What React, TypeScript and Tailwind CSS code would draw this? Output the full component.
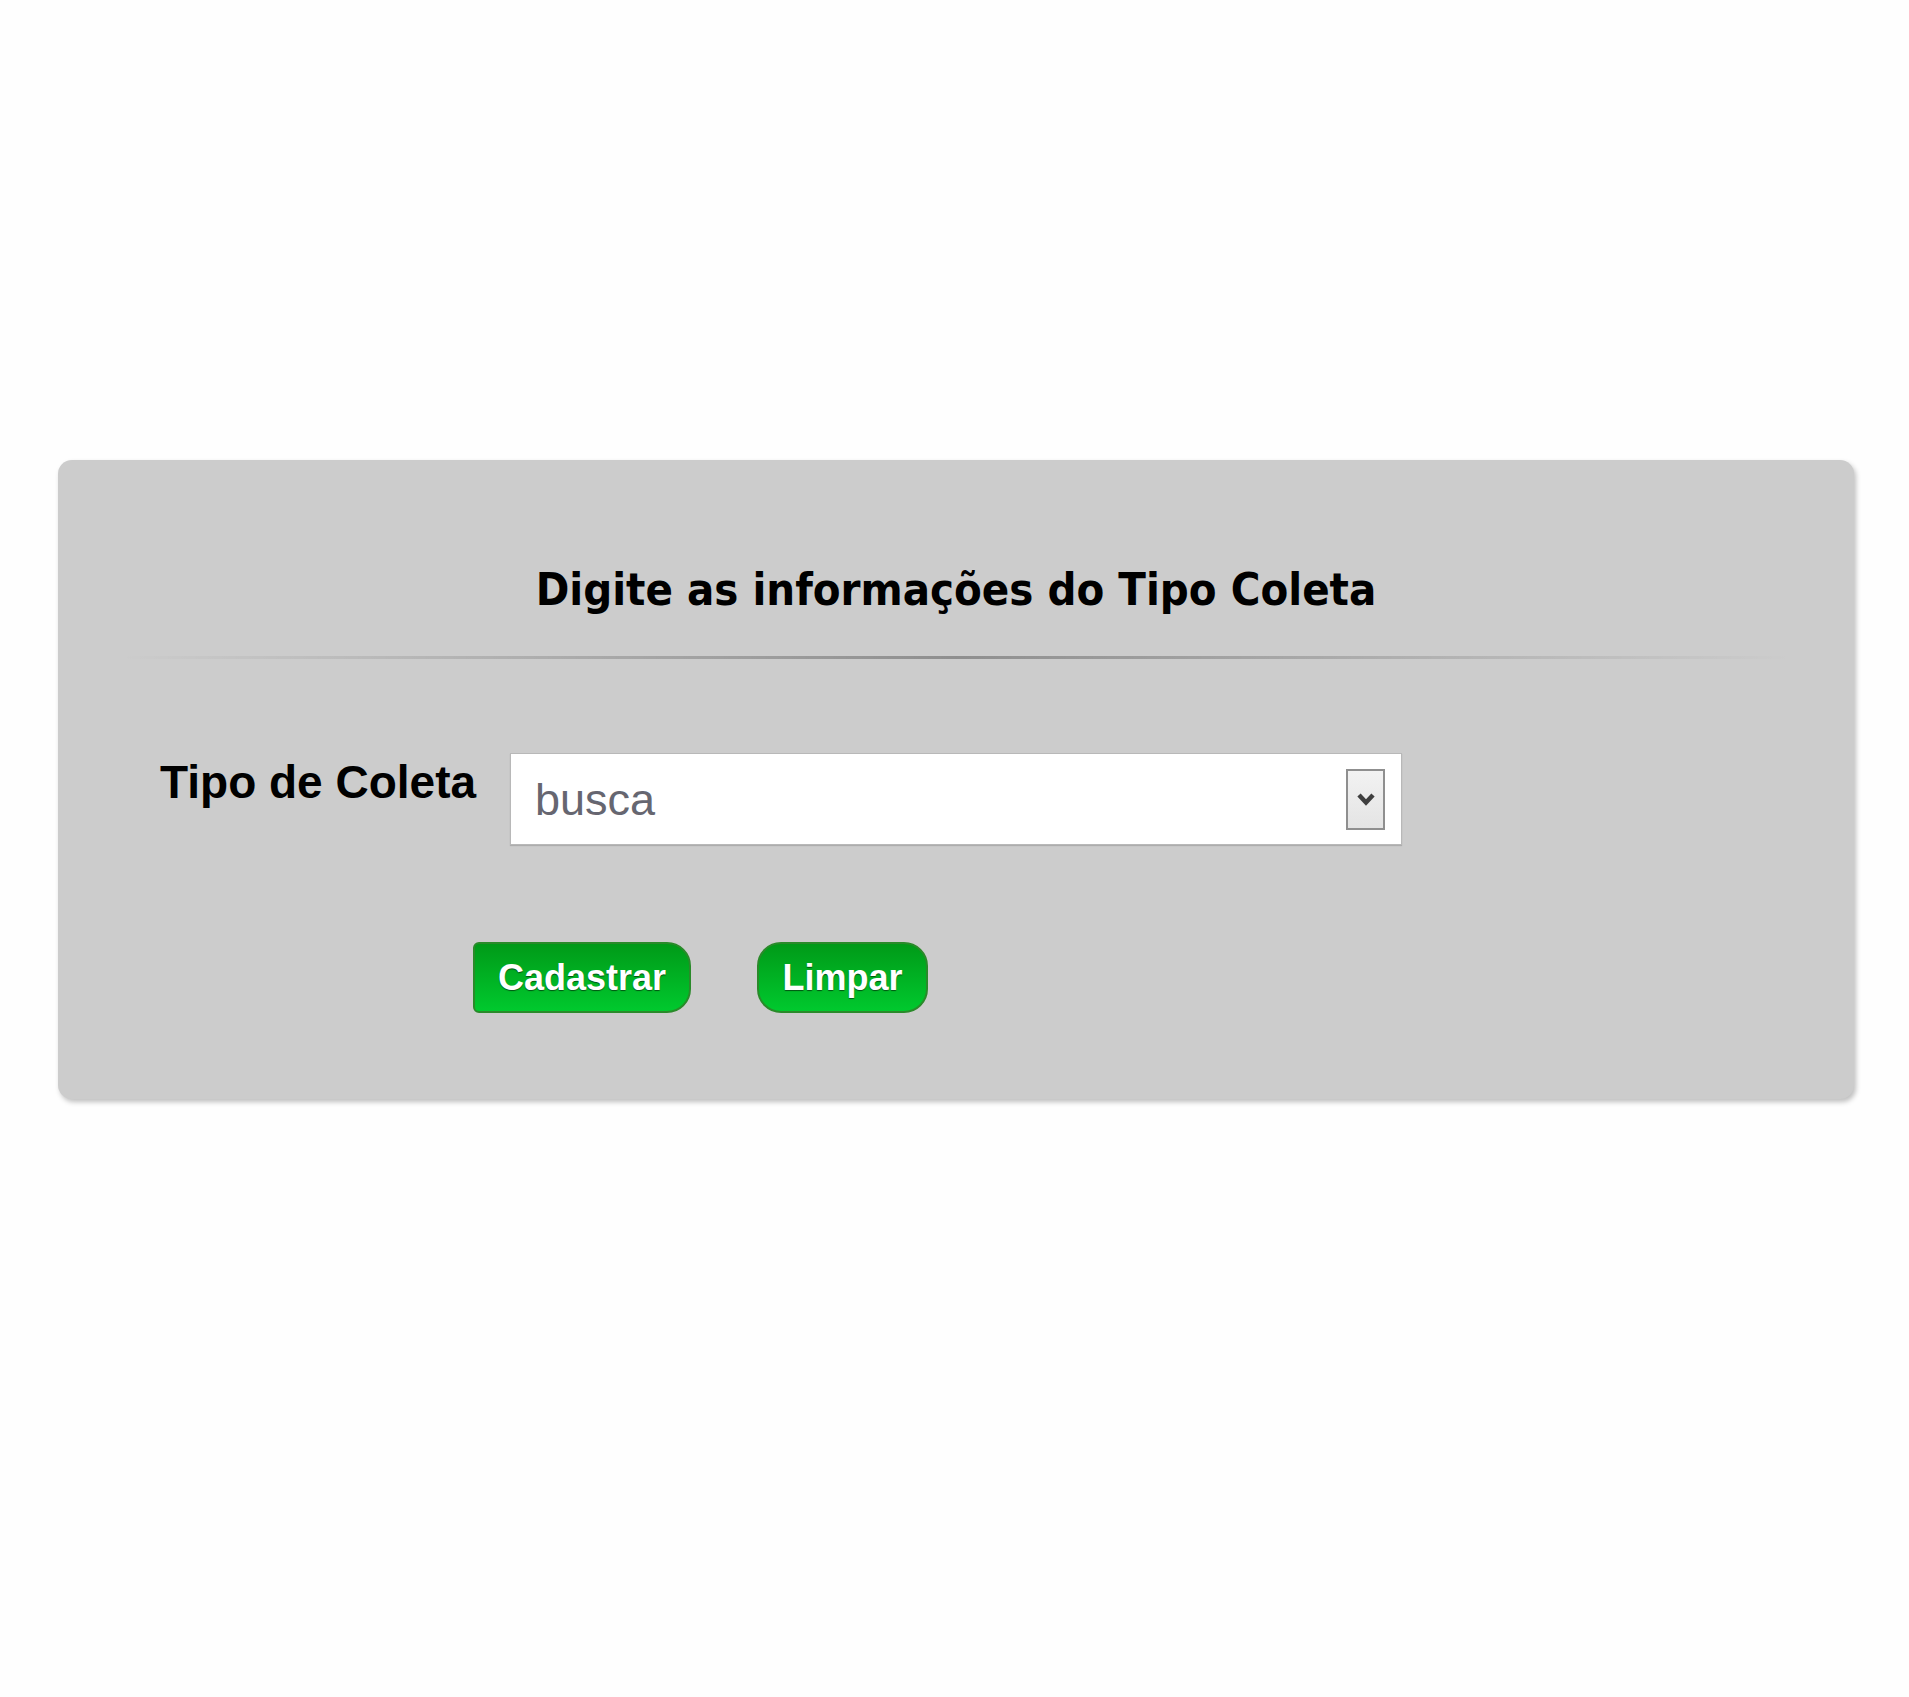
import React from "react";

export default function App() {
  return (
    <div className="min-h-[1697px] w-full bg-[#fefefe] pt-[460px]">
      <div className="ml-[58px] flex h-[639px] w-[1796px] flex-col rounded-[14px] bg-[#cccccc] shadow-[2px_3px_5px_rgba(0,0,0,0.25)]">
        <h1
          className="pt-[107px] text-center text-[45px] font-bold leading-[45px] text-black"
          style={{ fontFamily: '"DejaVu Sans Condensed", "DejaVu Sans", sans-serif' }}
        >
          Digite as informações do Tipo Coleta
        </h1>
        <div className="mx-[62px] mt-[44px] h-[3px] bg-[linear-gradient(to_right,rgba(0,0,0,0),rgba(0,0,0,0.3)_50%,rgba(0,0,0,0))]" />
        <div className="mt-[94px] flex items-start pl-[102px]">
          <label
            className="mt-[6px] w-[350px] shrink-0 text-[46px] font-bold leading-[46px] text-black"
            style={{ fontFamily: '"Liberation Sans", Arial, sans-serif' }}
          >
            Tipo de Coleta
          </label>
          <div className="flex h-[92px] w-[892px] items-center justify-between border border-[#b8b8b8] bg-white pl-[24px] pr-[16px] shadow-[0_1px_1px_rgba(0,0,0,0.15)]">
            <span
              className="text-[45px] leading-[45px] text-[#666670]"
              style={{ fontFamily: '"Liberation Sans", Arial, sans-serif' }}
            >
              busca
            </span>
            <div className="flex h-[61px] w-[39px] items-center justify-center border-2 border-[#8f8f8f] bg-[linear-gradient(to_bottom,#f2f2f2,#e4e4e4)]">
              <svg width="20" height="16" viewBox="0 0 20 16">
                <path d="M3 4 L10 11.5 L17 4" fill="none" stroke="#3f3f3f" strokeWidth="4.5" strokeLinecap="butt" strokeLinejoin="miter" />
              </svg>
            </div>
          </div>
        </div>
        <div className="mt-[97px] flex items-start gap-[66px] pl-[415px]">
          <button
            className="flex h-[71px] w-[218px] items-center justify-center rounded-l-[6px] rounded-r-[24px] border-2 border-[#2a8a2a] bg-[linear-gradient(to_bottom,#009a18,#00c92e)] text-[36px] font-bold text-white [text-shadow:0_1px_1px_rgba(0,0,0,0.55)]"
            style={{ fontFamily: '"Liberation Sans", Arial, sans-serif' }}
          >
            Cadastrar
          </button>
          <button
            className="flex h-[71px] w-[171px] items-center justify-center rounded-[24px] border-2 border-[#2a8a2a] bg-[linear-gradient(to_bottom,#009a18,#00c92e)] text-[36px] font-bold text-white [text-shadow:0_1px_1px_rgba(0,0,0,0.55)]"
            style={{ fontFamily: '"Liberation Sans", Arial, sans-serif' }}
          >
            Limpar
          </button>
        </div>
      </div>
    </div>
  );
}
